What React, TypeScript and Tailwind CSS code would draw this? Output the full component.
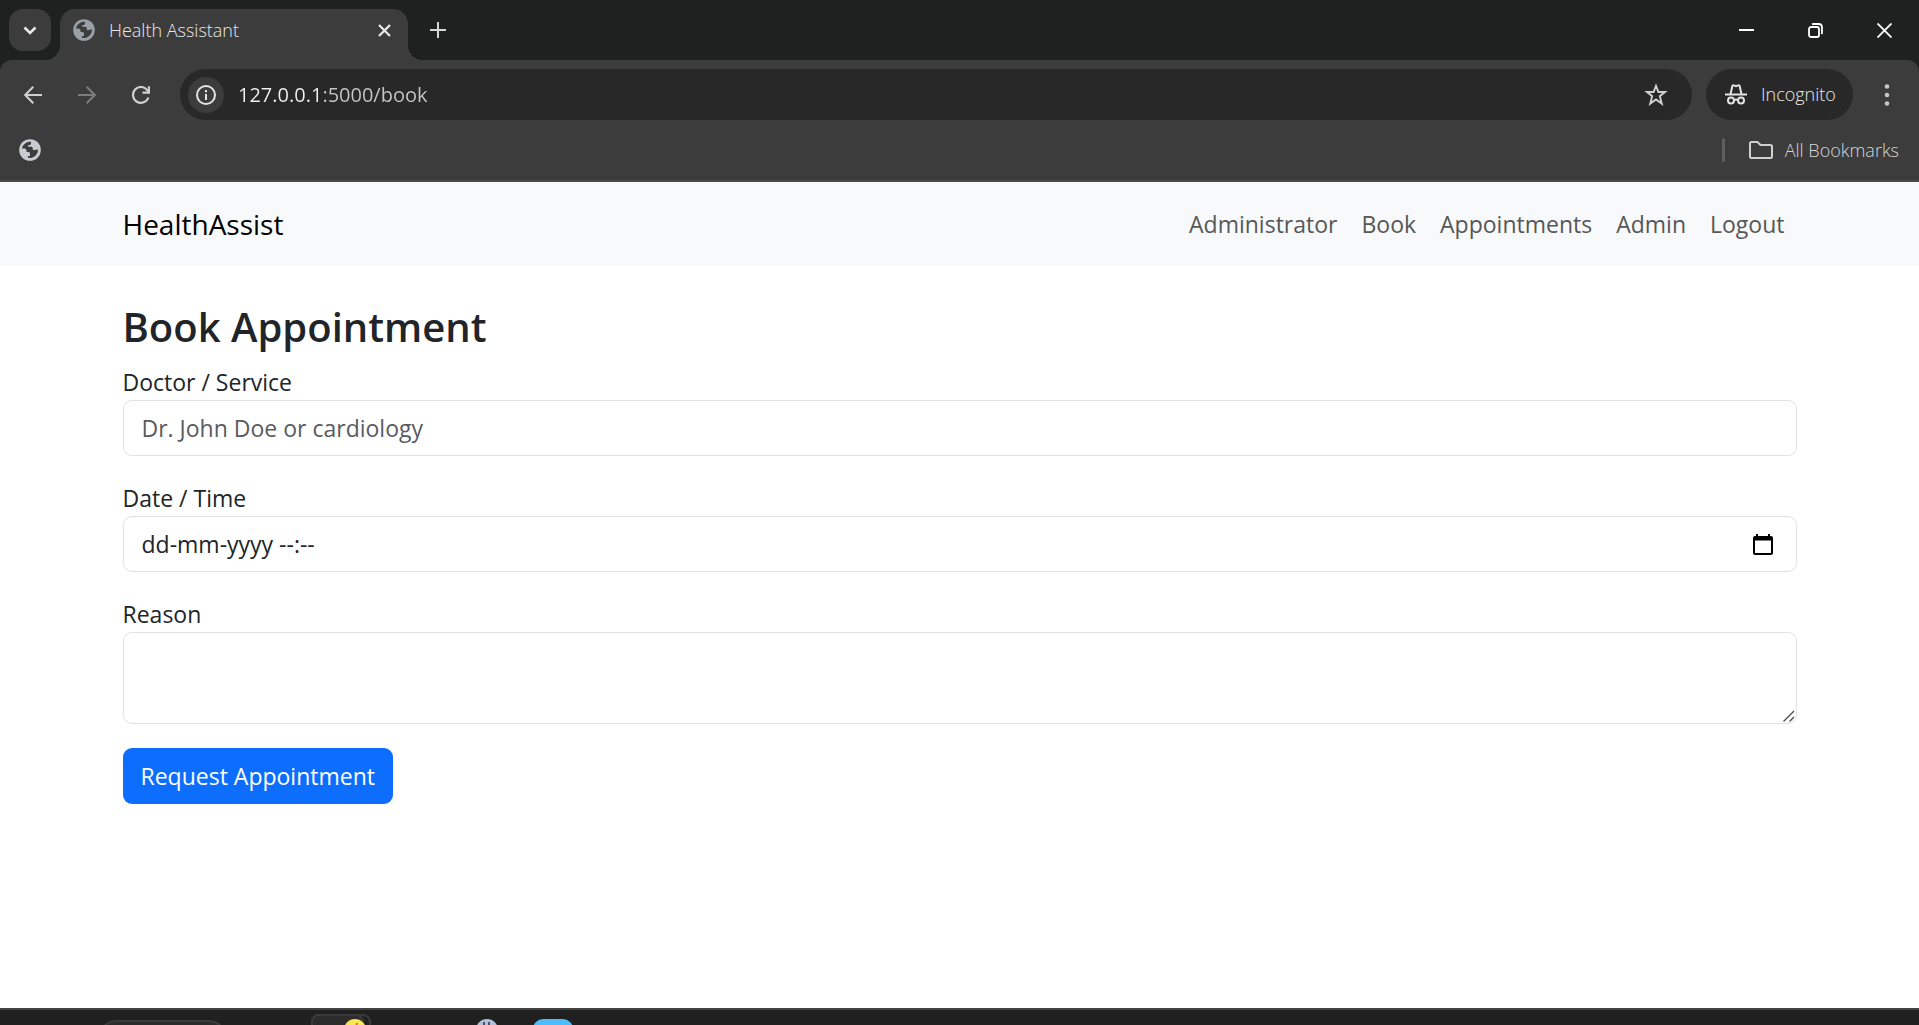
import React, { useState } from "react";

function GlobeIcon({ className }: { className: string }) {
  return (
    <svg viewBox="5 5 22 22" className={`size-[22px] shrink-0 ${className}`} aria-hidden="true">
      <circle cx="16" cy="16" r="10.8" fill="currentColor" />
      <path
        d="M8 14.6C8.6 11 11.6 8.2 15.4 7.7l1.6.1v1.4c0 1-.8 1.9-1.8 1.9h-1v1.6h2.9c1 0 1.7.7 1.7 1.6v1.6h2.1c.8 0 1.4-.3 2.2-.3h.9c0 4.400-3.2 8.100-7.500 8.400l-2.600-.2v-1.900h2.100v-2.100c0-1-.8-1.700-1.700-1.700h-1.800v-2.200l-1.400-1.300z"
        fill="#3c3c3c"
      />
    </svg>
  );
}

function IncognitoIcon() {
  return (
    <svg viewBox="0 0 22 21" className="h-[21px] w-[22px] shrink-0" fill="none" stroke="#e3e3e3" strokeWidth="2" aria-hidden="true">
      <path d="M0 10.500H22" />
      <path d="M5.500 10.200L7.300 2.200Q7.600 1 8.800 1.400L11 2.100L13.200 1.400Q14.400 1 14.700 2.200L16.500 10.200" />
      <circle cx="6" cy="16.500" r="3" />
      <circle cx="16" cy="16.500" r="3" />
      <path d="M9 16.200Q11 15 13 16.200" />
    </svg>
  );
}

function TabStrip() {
  return (
    <header className="flex h-[60px] items-start bg-[#1f2120] pl-[9px] pt-[9px]">
      <button aria-label="Search tabs" className="z-10 grid size-[42px] place-items-center rounded-[14px] bg-[#3c3c3c]">
        <svg viewBox="0 0 14 9" className="h-[9px] w-[14px]" fill="none" stroke="#e8e8e8" strokeWidth="2.600" aria-hidden="true">
          <path d="M1.500 1.500L7 7L12.500 1.500" />
        </svg>
      </button>
      <div className="relative ml-[9px] flex h-[51px] w-[348px] items-start rounded-t-[15px] bg-[#3c3c3c] pl-[13px] before:absolute before:bottom-0 before:-left-[15px] before:size-[15px] before:bg-[radial-gradient(circle_at_0_0,transparent_15px,#3c3c3c_15px)] after:absolute after:bottom-0 after:-right-[15px] after:size-[15px] after:bg-[radial-gradient(circle_at_100%_0,transparent_15px,#3c3c3c_15px)]">
        <div className="flex h-[42px] flex-1 items-center gap-3.5">
          <GlobeIcon className="text-[#9aa0a8]" />
          <span className="flex-1 text-[18px] font-light text-[#e8e8e8]">Health Assistant</span>
          <button aria-label="Close tab" className="mr-2 grid size-8 place-items-center">
            <svg viewBox="0 0 13 13" className="size-[13px]" fill="none" stroke="#e8e8e8" strokeWidth="2.300" aria-hidden="true">
              <path d="M1 1L12 12M12 1L1 12" />
            </svg>
          </button>
        </div>
      </div>
      <button aria-label="New tab" className="ml-[9px] grid size-[42px] place-items-center">
        <svg viewBox="0 0 16 16" className="size-4" fill="none" stroke="#d6d6d6" strokeWidth="2" aria-hidden="true">
          <path d="M8 0V16M0 8H16" />
        </svg>
      </button>
      <div className="ml-auto flex h-[42px] items-center text-white">
        <button aria-label="Minimize" className="grid h-full w-[69px] place-items-center">
          <svg viewBox="0 0 15 15" className="size-[15px]" stroke="currentColor" strokeWidth="2" aria-hidden="true">
            <path d="M0 7H15" />
          </svg>
        </button>
        <button aria-label="Restore" className="grid h-full w-[69px] place-items-center">
          <svg viewBox="0 0 15 15" className="size-[15px]" fill="none" stroke="currentColor" strokeWidth="1.800" aria-hidden="true">
            <rect x="1" y="4" width="10" height="10" rx="2" />
            <path d="M4 1.500Q4.600 1 5.500 1H10.500Q14 1 14 4.500V9.500Q14 10.400 13.500 11" />
          </svg>
        </button>
        <button aria-label="Close" className="grid h-full w-[69px] place-items-center">
          <svg viewBox="0 0 15 15" className="size-[15px]" fill="none" stroke="currentColor" strokeWidth="1.800" aria-hidden="true">
            <path d="M.5 .5L14.500 14.500M14.500 .5L.5 14.500" />
          </svg>
        </button>
      </div>
    </header>
  );
}

function Toolbar() {
  return (
    <div className="bg-[#1f2120]">
      <div className="rounded-t-[12px] bg-[#3c3c3c]">
        <div className="flex items-center pb-0 pl-[6px] pr-[5px] pt-[9px]">
          <button aria-label="Back" className="grid h-[51px] w-[54px] place-items-center text-[#d0d0d0]">
            <svg viewBox="0 0 18 18" className="size-[18px]" fill="none" stroke="currentColor" strokeWidth="2" aria-hidden="true">
              <path d="M18 9H1.500M9.300 .8L1.200 9L9.300 17.200" />
            </svg>
          </button>
          <button aria-label="Forward" className="grid h-[51px] w-[54px] place-items-center text-[#7d7d7d]">
            <svg viewBox="0 0 18 18" className="size-[18px]" fill="none" stroke="currentColor" strokeWidth="2" aria-hidden="true">
              <path d="M0 9H16.500M8.700 .8L16.800 9L8.700 17.200" />
            </svg>
          </button>
          <button aria-label="Reload" className="grid h-[51px] w-[54px] place-items-center text-[#d0d0d0]">
            <svg viewBox="0 0 18 18" className="size-[18px]" fill="none" stroke="currentColor" strokeWidth="2.200" aria-hidden="true">
              <path d="M16.400 11.500A7.900 7.900 0 1 1 15.300 4.200L16.800 6.200M17 .3V6.700H10.500" />
            </svg>
          </button>
          <div className="ml-3 flex h-[51px] flex-1 items-center rounded-full bg-[#282828] pl-2 pr-6">
            <button aria-label="View site information" className="grid size-9 place-items-center rounded-full bg-[#3c3c3c]">
              <svg viewBox="0 0 20 20" className="size-5" fill="none" stroke="#e3e3e3" strokeWidth="2" aria-hidden="true">
                <circle cx="10" cy="10" r="9" />
                <path d="M10 9V15M10 5V7.200" />
              </svg>
            </button>
            <input
              aria-label="Address"
              defaultValue="127.0.0.1:5000/book"
              className="ml-[14px] h-9 min-w-0 flex-1 bg-[linear-gradient(90deg,#f2f2f2_82px,#c7c7c7_82px)] bg-clip-text text-[20px] text-transparent caret-white outline-none"
            />
            <button aria-label="Bookmark this tab" className="grid place-items-center">
              <svg viewBox="0 0 24 24" className="size-6" fill="none" stroke="#d0d0d0" strokeWidth="1.900" aria-hidden="true">
                <path d="M12 2.800L14.400 9H21L15.800 13.200L17.800 20.600L12 16.500L6.200 20.600L8.200 13.200L3 9H9.600Z" />
              </svg>
            </button>
          </div>
          <button className="ml-[14px] flex h-[51px] w-[147px] items-center gap-[14px] rounded-full bg-[#282828] pl-[19px] text-[18px] font-light text-[#e8e8e8]">
            <IncognitoIcon />
            Incognito
          </button>
          <button aria-label="Menu" className="ml-[7px] grid h-[51px] w-[54px] place-items-center">
            <svg viewBox="0 0 6 22" className="h-[22px] w-[6px]" fill="#c7c7c7" aria-hidden="true">
              <circle cx="3" cy="2.500" r="2.300" />
              <circle cx="3" cy="11" r="2.300" />
              <circle cx="3" cy="19.500" r="2.300" />
            </svg>
          </button>
        </div>
        <div className="flex h-[62px] items-center border-b-2 border-[#4a4a4a] pl-[19px] pr-5">
          <a href="#" aria-label="Bookmark">
            <GlobeIcon className="text-[#c8ccd2]" />
          </a>
          <span className="ml-auto h-6 w-[3px] rounded-full bg-[#5e5e5e]" />
          <button className="ml-6 flex items-center gap-3 text-[18px] font-light text-[#d6d6d6]">
            <svg viewBox="0 0 24 18" className="h-[18px] w-6" fill="none" stroke="#d0d0d0" strokeWidth="2" aria-hidden="true">
              <path d="M2.500 1H8.500L11.500 4H21.500Q23 4 23 5.500V15.500Q23 17 21.500 17H2.500Q1 17 1 15.500V2.500Q1 1 2.500 1Z" />
            </svg>
            All Bookmarks
          </button>
        </div>
      </div>
    </div>
  );
}

const links = ["Administrator", "Book", "Appointments", "Admin", "Logout"];

function Navbar() {
  return (
    <nav className="bg-[#f8f9fb] py-3">
      <div className="mx-auto flex max-w-[1710px] items-center justify-between px-[18px]">
        <a href="#" className="text-[28px] leading-[60px] text-black">
          HealthAssist
        </a>
        <ul className="flex">
          {links.map((l) => (
            <li key={l}>
              <a href="#" className="block px-3 py-3 leading-9 text-[#565758]">
                {l}
              </a>
            </li>
          ))}
        </ul>
      </div>
    </nav>
  );
}

const field = "block w-full rounded-[9px] border border-[#dee2e6] bg-white px-[18px] py-[9px] leading-9 text-[#212529] outline-none";

function BookingForm() {
  const [date, setDate] = useState("dd-mm-yyyy --:--");
  return (
    <main className="mx-auto w-full max-w-[1710px] flex-1 px-[18px] pt-9">
      <h1 className="mb-3 text-[40px] font-semibold leading-[50px]">Book Appointment</h1>
      <form onSubmit={(e) => e.preventDefault()}>
        <div className="mb-6">
          <label htmlFor="doctor" className="block leading-9">
            Doctor / Service
          </label>
          <input id="doctor" placeholder="Dr. John Doe or cardiology" className={`${field} placeholder:text-[#595c5f] placeholder:opacity-100`} />
        </div>
        <div className="mb-6">
          <label htmlFor="when" className="block leading-9">
            Date / Time
          </label>
          <div className="relative">
            <input id="when" value={date} onChange={(e) => setDate(e.target.value)} className={field} />
            <button type="button" aria-label="Show date picker" className="absolute inset-y-0 right-6 grid place-items-center">
              <svg viewBox="0 0 20 21" className="h-[21px] w-5" aria-hidden="true">
                <path fill="#000" fillRule="evenodd" d="M3 0H5V2H15V0H17V2H18Q20 2 20 4V19Q20 21 18 21H2Q0 21 0 19V4Q0 2 2 2H3ZM2 6.500V19H18V6.500Z" />
              </svg>
            </button>
          </div>
        </div>
        <div className="mb-6">
          <label htmlFor="reason" className="block leading-9">
            Reason
          </label>
          <div className="relative">
            <textarea id="reason" rows={2} className={`${field} resize-none`} />
            <svg viewBox="0 0 12 12" className="absolute bottom-0.5 right-0.5 size-3" stroke="#4a4a4a" strokeWidth="1.300" aria-hidden="true">
              <path d="M.5 11.500L11 1M6.500 11.500L11 7" />
            </svg>
          </div>
        </div>
        <button type="submit" className="rounded-[9px] bg-[#0d6efd] px-[18px] py-2.5 leading-9 text-white">
          Request Appointment
        </button>
      </form>
    </main>
  );
}

function Taskbar() {
  return (
    <footer className="flex h-[17px] items-start overflow-hidden border-t-2 border-[#434343] bg-[#202020]">
      <div className="ml-[97px] mt-2.5 h-10 w-[131px] shrink-0 rounded-full border-2 border-[#3a3a3a] bg-[#2a2a2a]" />
      <div className="ml-[83px] mt-1 flex h-10 w-[60px] shrink-0 rounded-lg border-2 border-[#3a3a3a] bg-[#222222]">
        <div className="-ml-0.5 -mt-0.5 h-10 w-[53px] rounded-lg border-2 border-[#3a3a3a] bg-[#2c2c2c] pl-[31px] pt-[3px]">
          <svg viewBox="0 0 22 22" className="size-[22px]" aria-hidden="true">
            <circle cx="11" cy="11" r="11" fill="#f8e652" />
            <path d="M13 4L12 9" stroke="#e0702c" strokeWidth="2" />
          </svg>
        </div>
      </div>
      <svg viewBox="0 0 22 22" className="ml-[105px] mt-[9px] size-[22px] shrink-0" aria-hidden="true">
        <circle cx="11" cy="11" r="11" fill="#b4bfd8" />
        <path d="M8 3V7M13 3V7" stroke="#4b5263" strokeWidth="2" />
      </svg>
      <div className="ml-[35px] mt-[9px] size-10 shrink-0 rounded-[10px] bg-[#4cbcfb]" />
    </footer>
  );
}

export default function App() {
  return (
    <div className="flex min-h-screen flex-col bg-white font-['Open_Sans','Noto_Sans',sans-serif] text-[23px] text-[#212529]">
      <TabStrip />
      <Toolbar />
      <Navbar />
      <BookingForm />
      <Taskbar />
    </div>
  );
}
